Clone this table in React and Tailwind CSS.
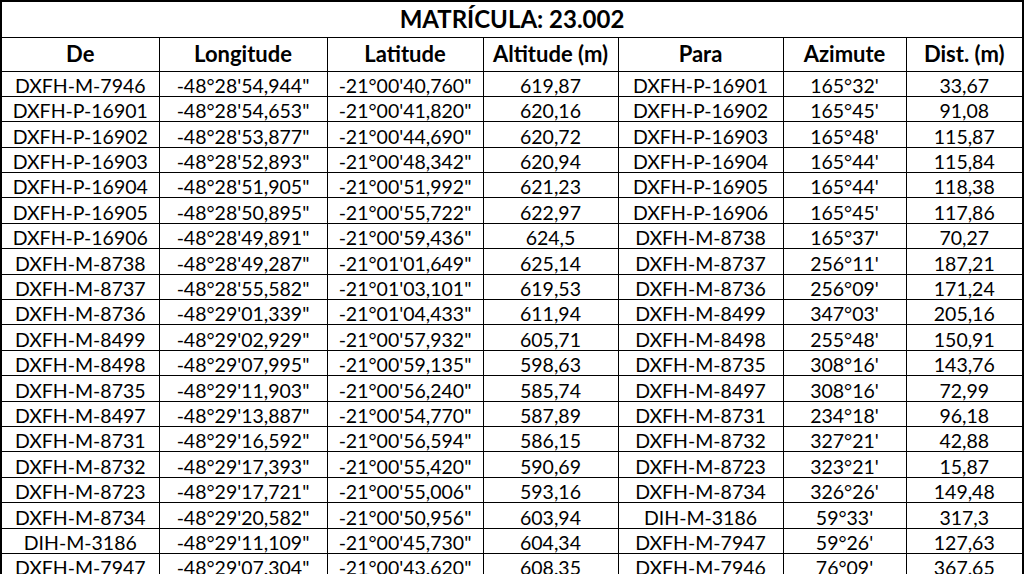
const rows = [
  ['DXFH-M-7946', '-48°28\'54,944"', '-21°00\'40,760"', '619,87', 'DXFH-P-16901', "165°32'", '33,67'],
  ['DXFH-P-16901', '-48°28\'54,653"', '-21°00\'41,820"', '620,16', 'DXFH-P-16902', "165°45'", '91,08'],
  ['DXFH-P-16902', '-48°28\'53,877"', '-21°00\'44,690"', '620,72', 'DXFH-P-16903', "165°48'", '115,87'],
  ['DXFH-P-16903', '-48°28\'52,893"', '-21°00\'48,342"', '620,94', 'DXFH-P-16904', "165°44'", '115,84'],
  ['DXFH-P-16904', '-48°28\'51,905"', '-21°00\'51,992"', '621,23', 'DXFH-P-16905', "165°44'", '118,38'],
  ['DXFH-P-16905', '-48°28\'50,895"', '-21°00\'55,722"', '622,97', 'DXFH-P-16906', "165°45'", '117,86'],
  ['DXFH-P-16906', '-48°28\'49,891"', '-21°00\'59,436"', '624,5', 'DXFH-M-8738', "165°37'", '70,27'],
  ['DXFH-M-8738', '-48°28\'49,287"', '-21°01\'01,649"', '625,14', 'DXFH-M-8737', "256°11'", '187,21'],
  ['DXFH-M-8737', '-48°28\'55,582"', '-21°01\'03,101"', '619,53', 'DXFH-M-8736', "256°09'", '171,24'],
  ['DXFH-M-8736', '-48°29\'01,339"', '-21°01\'04,433"', '611,94', 'DXFH-M-8499', "347°03'", '205,16'],
  ['DXFH-M-8499', '-48°29\'02,929"', '-21°00\'57,932"', '605,71', 'DXFH-M-8498', "255°48'", '150,91'],
  ['DXFH-M-8498', '-48°29\'07,995"', '-21°00\'59,135"', '598,63', 'DXFH-M-8735', "308°16'", '143,76'],
  ['DXFH-M-8735', '-48°29\'11,903"', '-21°00\'56,240"', '585,74', 'DXFH-M-8497', "308°16'", '72,99'],
  ['DXFH-M-8497', '-48°29\'13,887"', '-21°00\'54,770"', '587,89', 'DXFH-M-8731', "234°18'", '96,18'],
  ['DXFH-M-8731', '-48°29\'16,592"', '-21°00\'56,594"', '586,15', 'DXFH-M-8732', "327°21'", '42,88'],
  ['DXFH-M-8732', '-48°29\'17,393"', '-21°00\'55,420"', '590,69', 'DXFH-M-8723', "323°21'", '15,87'],
  ['DXFH-M-8723', '-48°29\'17,721"', '-21°00\'55,006"', '593,16', 'DXFH-M-8734', "326°26'", '149,48'],
  ['DXFH-M-8734', '-48°29\'20,582"', '-21°00\'50,956"', '603,94', 'DIH-M-3186', "59°33'", '317,3'],
  ['DIH-M-3186', '-48°29\'11,109"', '-21°00\'45,730"', '604,34', 'DXFH-M-7947', "59°26'", '127,63'],
  ['DXFH-M-7947', '-48°29\'07,304"', '-21°00\'43,620"', '608,35', 'DXFH-M-7946', "76°09'", '367,65'],
]

const headers = ['De', 'Longitude', 'Latitude', 'Altitude (m)', 'Para', 'Azimute', 'Dist. (m)']
const widths = [158, 168, 156, 135, 165, 123, 117]

export default function App() {
  return (
    <div className="w-[1024px] h-[574px] overflow-hidden bg-white text-black font-['Lato',sans-serif]">
      <table className="table-fixed border-collapse w-[1022px] border-2 border-black">
        <colgroup>
          {widths.map((w, i) => (
            <col key={i} style={{ width: w }} />
          ))}
        </colgroup>
        <thead>
          <tr className="h-[36px]">
            <th colSpan={7} className="border border-black text-[24px] leading-[26px] font-bold align-middle p-0">
              MATRÍCULA: 23.002
            </th>
          </tr>
          <tr className="h-[34px]">
            {headers.map((h) => (
              <th key={h} className="border border-black text-[22px] leading-[24px] font-bold align-middle p-0">
                {h}
              </th>
            ))}
          </tr>
        </thead>
        <tbody>
          {rows.map((r, i) => (
            <tr key={i} className="h-[25.4px]">
              {r.map((c, j) => (
                <td key={j} className="border border-black text-[19.5px] leading-[20px] text-center align-bottom p-0 whitespace-nowrap">
                  {c}
                </td>
              ))}
            </tr>
          ))}
        </tbody>
      </table>
    </div>
  )
}
